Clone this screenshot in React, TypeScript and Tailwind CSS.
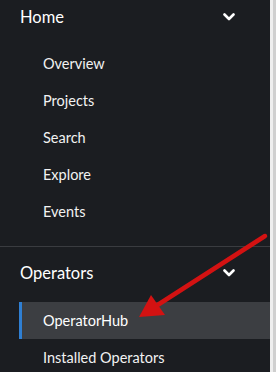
import React from "react";

const Chevron = () => (
  <svg width="12" height="8" viewBox="0 0 12 8" className="block">
    <polyline points="1.5,1.5 6,6 10.5,1.5" fill="none" stroke="#ffffff" strokeWidth="2.6" strokeLinecap="round" strokeLinejoin="round" />
  </svg>
);

const Item = ({ label, active }: { label: string; active?: boolean }) =>
  active ? (
    <li className="h-[37px] ml-[19px] flex items-center border-l-[3px] border-[#2f7fd3] bg-[#3c3e42] pl-[21px] text-[14.5px] text-white">
      {label}
    </li>
  ) : (
    <li className="h-[37px] flex items-center pl-[43px] text-[14.5px] text-[#f2f2f2]">{label}</li>
  );

export default function App() {
  return (
    <div className="relative w-[276px] h-[372px] overflow-hidden flex" style={{ fontFamily: "Lato, 'Noto Sans', sans-serif" }}>
      <div className="w-[270px] h-full bg-[#1b1d21] flex flex-col">
        <div className="pb-[16px] border-b border-[#3a3c40]">
          <div className="h-[34px] flex items-center justify-between pl-[20px] pr-[35px]">
            <span className="text-[16.5px] text-white">Home</span>
            <Chevron />
          </div>
          <ul className="pt-[11px]">
            <Item label="Overview" />
            <Item label="Projects" />
            <Item label="Search" />
            <Item label="Explore" />
            <Item label="Events" />
          </ul>
        </div>
        <div className="pt-[9px]">
          <div className="h-[34px] flex items-center justify-between pl-[20px] pr-[35px]">
            <span className="text-[16.5px] text-white">Operators</span>
            <Chevron />
          </div>
          <ul className="pt-[12px]">
            <Item label="OperatorHub" active />
            <Item label="Installed Operators" />
          </ul>
        </div>
      </div>
      <div className="w-[3px] h-full bg-[#eeeeee]" />
      <div className="w-[3px] h-full bg-[#cfcfcf]" />
      <svg className="absolute left-0 top-0" width="276" height="372" viewBox="0 0 276 372">
        <line x1="265" y1="236" x2="156" y2="306" stroke="#d31212" strokeWidth="4.5" strokeLinecap="round" />
        <polygon points="139,317 151,295 165,315" fill="#d31212" />
      </svg>
    </div>
  );
}
